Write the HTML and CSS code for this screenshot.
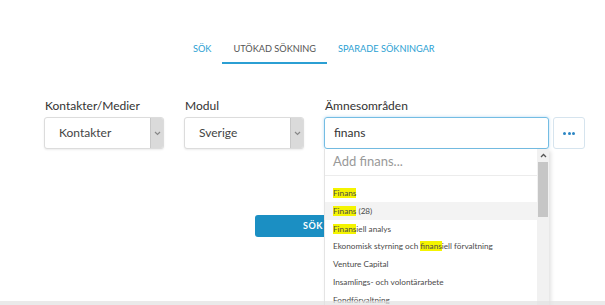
FILE: index.html
```html
<!DOCTYPE html>
<html lang="sv">
<head>
    <meta charset="UTF-8">
    <meta name="viewport" content="width=device-width, initial-scale=1.0">
    <title>Utökad sökning</title>
    <link rel="stylesheet" href="styles.css">
</head>
<body>
    <ul class="tabs">
        <li class="tab">SÖK</li>
        <li class="tab active">UTÖKAD SÖKNING</li>
        <li class="tab">SPARADE SÖKNINGAR</li>
    </ul>

    <div class="form-row">
        <div class="field field-select">
            <label>Kontakter/Medier</label>
            <div class="select">
                <span class="select-value">Kontakter</span>
                <span class="select-arrow">
                    <svg width="7" height="5" viewBox="0 0 7 5"><path d="M1 1l2.5 2.5L6 1" fill="none" stroke="#888" stroke-width="1.2"/></svg>
                </span>
            </div>
        </div>
        <div class="field field-select">
            <label>Modul</label>
            <div class="select">
                <span class="select-value">Sverige</span>
                <span class="select-arrow">
                    <svg width="7" height="5" viewBox="0 0 7 5"><path d="M1 1l2.5 2.5L6 1" fill="none" stroke="#888" stroke-width="1.2"/></svg>
                </span>
            </div>
        </div>
        <div class="field field-topic">
            <label>Ämnesområden</label>
            <div class="topic-input">
                <div class="text-input">finans</div>
                <div class="suggest">
                    <div class="suggest-list">
                        <div class="suggest-add">Add finans...</div>
                        <ul class="suggest-items">
                            <li><mark>Finans</mark></li>
                            <li class="hover"><mark>Finans</mark> (28)</li>
                            <li><mark>Finans</mark>iell analys</li>
                            <li>Ekonomisk styrning och <mark>finans</mark>iell förvaltning</li>
                            <li>Venture Capital</li>
                            <li>Insamlings- och volontärarbete</li>
                            <li>Fondförvaltning</li>
                        </ul>
                    </div>
                    <div class="scrollbar">
                        <div class="scroll-up">
                            <svg width="7" height="5" viewBox="0 0 7 5"><path d="M1 4l2.5-2.5L6 4" fill="none" stroke="#555" stroke-width="1.3"/></svg>
                        </div>
                        <div class="scroll-thumb"></div>
                    </div>
                </div>
            </div>
        </div>
        <div class="field field-more">
            <button class="more-btn">
                <span class="dot"></span><span class="dot"></span><span class="dot"></span>
            </button>
        </div>
    </div>

    <div class="actions">
        <button class="search-btn">SÖK</button>
    </div>

    <div class="footer-band"></div>
</body>
</html>
```

FILE: styles.css
```css
:root {
    --blue: #2b9fd3;
    --btn-blue: #1b8fc3;
    --text: #444;
    --border: #dcdcdc;
}

* {
    box-sizing: border-box;
}

body {
    margin: 0;
    background: #fff;
    font-family: 'Lato', 'Liberation Sans', sans-serif;
    color: var(--text);
    height: 305px;
    overflow: hidden;
}

.tabs {
    list-style: none;
    margin: 0;
    padding: 43px 0 0 182px;
    display: flex;
}

.tab {
    padding: 0 11px 7px;
    font-size: 9.2px;
    line-height: 12px;
    color: var(--blue);
    border-bottom: 2px solid transparent;
}

.tab.active {
    color: #555;
    border-bottom-color: var(--blue);
}

.form-row {
    display: flex;
    padding: 32px 0 0 44px;
}

.field {
    display: flex;
    flex-direction: column;
}

.field label {
    font-size: 12px;
    line-height: 16px;
    color: #333;
    height: 21px;
    padding: 2px 0 0 1px;
}

.field-select {
    width: 120px;
    margin-right: 20px;
}

.field-topic {
    width: 225px;
    margin-right: 4px;
}

.field-more {
    padding-top: 21px;
}

.select {
    display: flex;
    height: 32px;
    border: 1px solid var(--border);
    border-radius: 3px;
    background: #fff;
    box-shadow: 0 1px 2px rgba(0,0,0,0.08);
    overflow: hidden;
}

.select-value {
    flex: 1;
    font-size: 12px;
    color: #444;
    padding-left: 14px;
    line-height: 30px;
}

.select-arrow {
    width: 13px;
    background: #dadada;
    border-left: 1px solid #c8c8c8;
    display: flex;
    align-items: center;
    justify-content: center;
}

.topic-input {
    position: relative;
}

.text-input {
    height: 32px;
    border: 1px solid #74bde3;
    border-radius: 3px;
    box-shadow: 0 0 3px rgba(102,175,233,0.5);
    font-size: 12px;
    color: #333;
    padding-left: 9px;
    line-height: 30px;
}

.more-btn {
    width: 32px;
    height: 32px;
    border: 1px solid #d6e4ee;
    border-radius: 3px;
    background: #fff;
    display: flex;
    align-items: center;
    justify-content: center;
    gap: 1.5px;
    padding: 0;
}

.dot {
    width: 3px;
    height: 3px;
    border-radius: 50%;
    background: #2b86c4;
}

.suggest {
    position: absolute;
    top: 32px;
    left: 0;
    width: 225px;
    height: 160px;
    display: flex;
    background: #fff;
    border-left: 1px solid #e4e4e4;
    box-shadow: 2px 2px 4px rgba(0,0,0,0.12);
    z-index: 10;
    overflow: hidden;
}

.suggest-list {
    flex: 1;
}

.suggest-add {
    height: 27px;
    line-height: 24px;
    font-size: 13px;
    color: #999;
    padding-left: 8px;
    border-bottom: 1px solid #ececec;
}

.suggest-items {
    list-style: none;
    margin: 0;
    padding: 8px 0 0;
}

.suggest-items li {
    height: 17.8px;
    line-height: 18px;
    font-size: 8.2px;
    color: #4a4a4a;
    padding-left: 8px;
}

.suggest-items li.hover {
    background: #f3f3f3;
}

mark {
    background: #f4f400;
    color: inherit;
}

.scrollbar {
    width: 12px;
    background: #f1f1f1;
    display: flex;
    flex-direction: column;
}

.scroll-up {
    height: 13px;
    display: flex;
    align-items: center;
    justify-content: center;
}

.scroll-thumb {
    height: 55px;
    margin: 0 1px;
    background: #c6c6c6;
}

.actions {
    padding: 64px 0 0 255px;
}

.search-btn {
    width: 116px;
    height: 22px;
    border: none;
    border-radius: 3px;
    background: var(--btn-blue);
    color: #fff;
    font-family: inherit;
    font-size: 9px;
    font-weight: bold;
    letter-spacing: 0.6px;
    padding: 0;
}

.footer-band {
    position: fixed;
    left: 0;
    right: 0;
    bottom: 0;
    height: 4px;
    background: rgba(225,225,225,0.7);
    z-index: 20;
}
```
